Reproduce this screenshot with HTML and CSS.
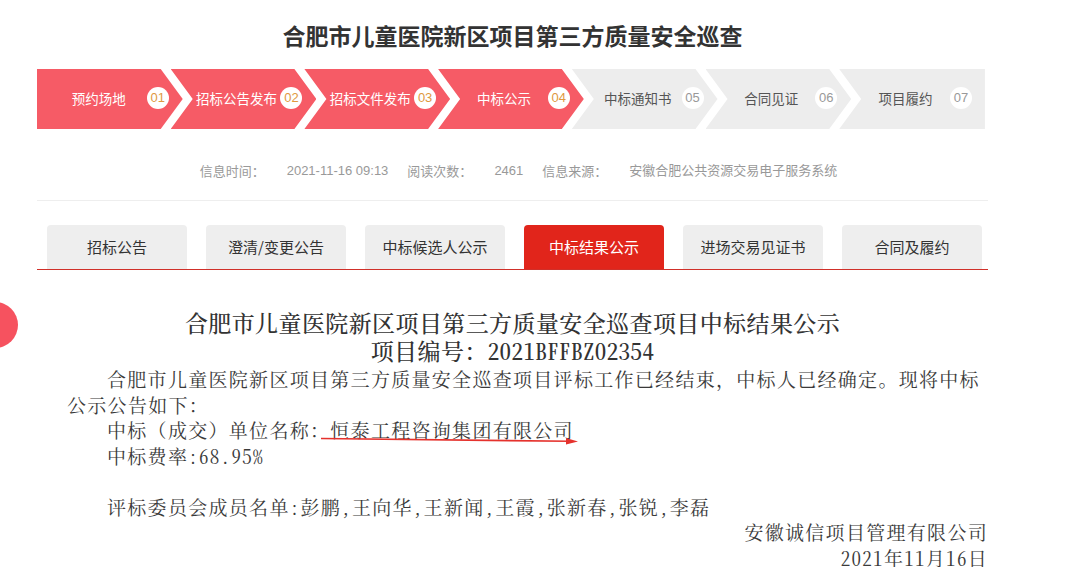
FILE: index.html
```html
<!DOCTYPE html>
<html lang="zh-CN">
<head>
    <meta charset="UTF-8">
    <meta name="viewport" content="width=device-width, initial-scale=1.0">
    <title>合肥市儿童医院新区项目第三方质量安全巡查</title>
    <link rel="stylesheet" href="styles.css">
</head>
<body>
    <span class="float-dot"></span>
    <div class="page">
        <h1 class="title">合肥市儿童医院新区项目第三方质量安全巡查</h1>

        <ul class="steps">
            <li class="step done"><span class="step-name">预约场地</span><span class="step-no">01</span></li>
            <li class="step done"><span class="step-name">招标公告发布</span><span class="step-no">02</span></li>
            <li class="step done"><span class="step-name">招标文件发布</span><span class="step-no">03</span></li>
            <li class="step done"><span class="step-name">中标公示</span><span class="step-no">04</span></li>
            <li class="step"><span class="step-name">中标通知书</span><span class="step-no">05</span></li>
            <li class="step"><span class="step-name">合同见证</span><span class="step-no">06</span></li>
            <li class="step"><span class="step-name">项目履约</span><span class="step-no">07</span></li>
        </ul>

        <div class="info">
            <span class="info-label">信息时间：</span><span class="info-value">2021-11-16 09:13</span>
            <span class="info-label">阅读次数：</span><span class="info-value">2461</span>
            <span class="info-label">信息来源：</span><span class="info-value">安徽合肥公共资源交易电子服务系统</span>
        </div>

        <div class="tabs">
            <a class="tab">招标公告</a>
            <a class="tab">澄清/变更公告</a>
            <a class="tab">中标候选人公示</a>
            <a class="tab active">中标结果公示</a>
            <a class="tab">进场交易见证书</a>
            <a class="tab">合同及履约</a>
        </div>

        <div class="article">
            <h2 class="article-title">合肥市儿童医院新区项目第三方质量安全巡查项目中标结果公示<br>项目编号：<span class="half">2021BFFBZ02354</span></h2>
            <p class="indent">合肥市儿童医院新区项目第三方质量安全巡查项目评标工作已经结束，中标人已经确定。现将中标公示公告如下：</p>
            <p class="indent">中标（成交）单位名称：<span class="mark">恒泰工程咨询集团有限公司<svg class="mark-arrow" width="260" height="12" viewBox="0 0 260 12"><path d="M1 5.5 Q 120 6.5 250 8.3" fill="none" stroke="#e5322d" stroke-width="1.6"/><polygon points="246,5 258,8.5 246,11.5" fill="#e5322d"/></svg></span></p>
            <p class="indent half">中标费率:68.95%</p>
            <p class="indent">&nbsp;</p>
            <p class="indent half">评标委员会成员名单:彭鹏,王向华,王新闻,王霞,张新春,张锐,李磊</p>
            <p class="right">安徽诚信项目管理有限公司</p>
            <p class="right half">2021年11月16日</p>
        </div>
    </div>
</body>
</html>
```

FILE: styles.css
```css
:root {
    --red: #f65b66;
    --tab-red: #e1251b;
    --gray-bg: #ededed;
    --text-color: #333;
}
body {
    margin: 0;
    padding: 0;
    background: #fff;
    color: var(--text-color);
    font-family: "Liberation Sans", "Noto Sans CJK SC", sans-serif;
    overflow: hidden;
}
.page {
    width: 951px;
    margin-left: 37px;
}
.title {
    margin: 0;
    padding-top: 20px;
    line-height: 30px;
    font-size: 23px;
    font-weight: bold;
    text-align: center;
    color: #333;
    font-family: "Noto Sans CJK SC", sans-serif;
}
.float-dot {
    position: absolute;
    left: -28px;
    top: 302px;
    width: 46px;
    height: 46px;
    border-radius: 50%;
    background: #f6525f;
}

/* steps */
.steps {
    display: flex;
    width: 948px;
    height: 60px;
    margin: 19px 0 0;
    padding: 0;
    list-style: none;
}
.step {
    box-sizing: border-box;
    flex: 0 0 auto;
    width: calc((948px + 72px) / 7);
    display: flex;
    align-items: center;
    margin-left: -12px;
    padding: 0 14px 3px 22px;
    background: var(--gray-bg);
    color: #555;
    font-size: 13px;
    clip-path: polygon(0 0, calc(100% - 22px) 0, 100% 50%, calc(100% - 22px) 100%, 0 100%, 22px 50%);
}
.step:first-child {
    margin-left: 0;
    padding-left: 14px;
    clip-path: polygon(0 0, calc(100% - 22px) 0, 100% 50%, calc(100% - 22px) 100%, 0 100%);
}
.step:last-child {
    padding-right: 13px;
    clip-path: polygon(0 0, 100% 0, 100% 100%, 0 100%, 22px 50%);
}
.step.done {
    background: var(--red);
    color: #fff;
}
.step-name {
    flex: 1;
    text-align: center;
    font-size: 13.5px;
    font-family: "Noto Sans CJK SC", sans-serif;
    white-space: nowrap;
}
.step-no {
    width: 22px;
    height: 22px;
    line-height: 22px;
    border-radius: 50%;
    background: #fff;
    text-align: center;
    font-size: 13px;
    color: #999;
}
.step.done .step-no {
    color: #e0993f;
}

/* info line */
.info {
    display: flex;
    justify-content: center;
    padding: 32px 0 19px 12px;
    line-height: 20px;
    font-size: 13px;
    color: #999;
    border-bottom: 1px solid #eee;
}
.info-label {
    margin-right: 22px;
    font-family: "Noto Sans CJK SC", sans-serif;
}
.info-value {
    margin-right: 19px;
}
.info-value:last-child {
    margin-right: 0;
}

/* tabs */
.tabs {
    display: flex;
    gap: 19px;
    margin-top: 24px;
    padding-left: 10px;
    border-bottom: 1px solid #d0302a;
}
.tab {
    width: 140px;
    height: 44px;
    line-height: 44px;
    text-align: center;
    font-size: 15px;
    color: #333;
    background: #eee;
    border-radius: 4px 4px 0 0;
    font-family: "Noto Sans CJK SC", sans-serif;
}
.tab.active {
    background: var(--tab-red);
    color: #fff;
}

/* article */
.article {
    font-family: "Noto Serif CJK SC", "Liberation Serif", "Noto Sans CJK SC", serif;
    color: #3a3a3a;
}
.half {
    font-feature-settings: "hwid" 1;
}
.article-title {
    margin: 39px 0 0;
    line-height: 28px;
    font-size: 23px;
    letter-spacing: 0.4px;
    font-weight: 500;
    text-align: center;
    color: #333;
}
.article p {
    margin: 0;
    padding-left: 30px;
    font-size: 19px;
    letter-spacing: 1.3px;
    line-height: 25.5px;
}
.article p:first-of-type {
    margin-top: 1px;
}
.indent {
    text-indent: 40px;
}
.article .right {
    text-align: right;
}
.mark {
    position: relative;
}
.mark-arrow {
    position: absolute;
    left: -10px;
    top: 100%;
    margin-top: -10px;
}
```
